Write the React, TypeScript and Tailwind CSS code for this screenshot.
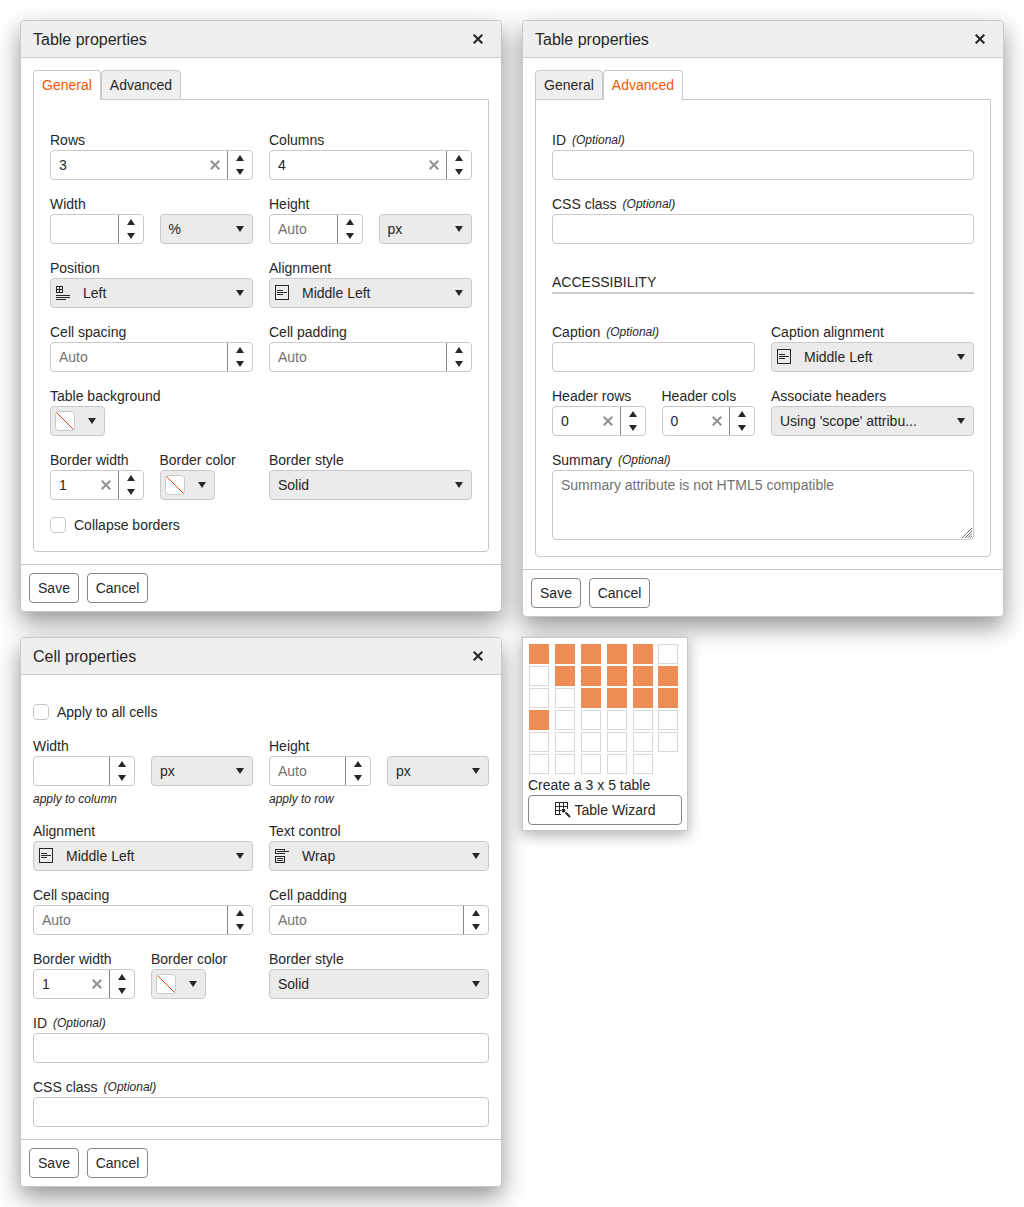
import type { ReactNode } from "react";

function Up({ down = false }: { down?: boolean }) {
  return (
    <svg width="8" height="6" viewBox="0 0 8 6" fill="#272727" className={down ? "rotate-180" : ""}>
      <path d="M4 0L8 6H0Z" />
    </svg>
  );
}

function Clear() {
  return (
    <svg width="10" height="10" viewBox="0 0 10 10" stroke="#939393" strokeWidth="2.1" className="mr-[7px] shrink-0">
      <path d="M.7.7L9.3 9.3M9.3.7L.7 9.3" />
    </svg>
  );
}

function Num({ value, placeholder }: { value?: string; placeholder?: string }) {
  return (
    <div className="flex h-[30px] w-full overflow-hidden rounded-[4px] border border-[#c9c9c9] bg-white">
      <div className="flex min-w-0 flex-1 items-center justify-between pl-2">
        <span className={value ? "" : "text-[#727272]"}>{value ?? placeholder}</span>
        {value && <Clear />}
      </div>
      <div className="flex w-[25px] flex-col items-center gap-2 border-l border-[#85858f] pt-1">
        <Up />
        <Up down />
      </div>
    </div>
  );
}

function Select({ children, icon }: { children: ReactNode; icon?: ReactNode }) {
  return (
    <div className="flex h-[30px] w-full items-center rounded-[4px] border border-[#c9c9c9] bg-[#ebebeb] pr-2">
      {icon && <span className="ml-[5px] mr-3 w-[15px] shrink-0">{icon}</span>}
      <span className={icon ? "flex-1 whitespace-nowrap" : "flex-1 whitespace-nowrap pl-2"}>{children}</span>
      <Up down />
    </div>
  );
}

function Color() {
  return (
    <div className="flex h-[30px] w-[55px] items-center justify-between rounded-[4px] border border-[#c9c9c9] bg-[#ebebeb] pl-1 pr-2">
      <svg width="20" height="20" viewBox="0 0 20 20">
        <rect x=".5" y=".5" width="19" height="19" rx="3" fill="#fff" stroke="#c9c9c9" />
        <path d="M1.5 1.5L18.5 18.5" stroke="#e0421d" />
      </svg>
      <Up down />
    </div>
  );
}

function Field({ label, optional, children }: { label: string; optional?: boolean; children?: ReactNode }) {
  return (
    <div className="min-w-0">
      <div className="h-5 whitespace-nowrap leading-5">
        {label}
        {optional && <i className="ml-1.5 align-top text-[12px] leading-5">(Optional)</i>}
      </div>
      {children ?? <div className="h-[30px] rounded-[4px] border border-[#c9c9c9] bg-white" />}
    </div>
  );
}

function Pair({ children }: { children: ReactNode }) {
  return <div className="grid grid-cols-2 gap-x-4">{children}</div>;
}

function Check({ children }: { children: ReactNode }) {
  return (
    <div className="flex h-4 items-center gap-2">
      <span className="size-4 rounded-[4px] border border-[#c9c9c9]" />
      {children}
    </div>
  );
}

function Button({ children, className }: { children: ReactNode; className: string }) {
  return (
    <button
      className={`${className} flex h-[30px] items-center justify-center rounded-[4px] border border-[#85858f] bg-white`}
    >
      {children}
    </button>
  );
}

function Dialog({ title, children }: { title: string; children: ReactNode }) {
  return (
    <section className="w-[482px] rounded-[4px] border border-[#c9c9c9] bg-white shadow-[0_10px_24px_rgba(0,0,0,0.42)]">
      <header className="flex h-[37px] items-center justify-between rounded-t-[3px] border-b border-[#c9c9c9] bg-[#efefef] pl-3 pr-[18px] text-[16px]">
        <span className="pt-0.5">{title}</span>
        <svg width="10" height="10" viewBox="0 0 10 10" stroke="#272727" strokeWidth="2.1">
          <path d="M.7.7L9.3 9.3M9.3.7L.7 9.3" />
        </svg>
      </header>
      <div className="p-3">{children}</div>
      <footer className="flex gap-2 border-t border-[#c9c9c9] p-2">
        <Button className="w-[50px]">Save</Button>
        <Button className="w-[61px]">Cancel</Button>
      </footer>
    </section>
  );
}

function Tabs({ active }: { active: string }) {
  return (
    <div className="relative z-10 -mb-px flex">
      {["General", "Advanced"].map((t) => (
        <div
          key={t}
          className={
            t === active
              ? "h-[30px] rounded-t-[4px] border border-b-white border-[#c9c9c9] bg-white px-2 leading-[28px] text-[#f35800]"
              : "h-[30px] rounded-t-[4px] border border-[#c9c9c9] bg-[#efefef] px-2 leading-[28px]"
          }
        >
          {t}
        </div>
      ))}
    </div>
  );
}

function Panel({ children }: { children: ReactNode }) {
  return (
    <div className="flex flex-col gap-3.5 rounded-b-[4px] border border-[#c9c9c9] px-4 pt-[30px]">{children}</div>
  );
}

const AlignIcon = () => (
  <svg width="15" height="16" viewBox="0 0 15 16" fill="none" stroke="#272727" shapeRendering="crispEdges">
    <path d="M.5 .5h13v14H.5zM2 5.5h6M2 7.5h10M2 9.5h6" />
  </svg>
);

const PositionIcon = () => (
  <svg width="15" height="16" viewBox="0 0 15 16" fill="none" stroke="#272727" shapeRendering="crispEdges">
    <path d="M.5 1.5h6v6h-6zM3.5 1v7M0 4.5h7M0 10.5h14M0 12.5h14M0 14.5h10" />
  </svg>
);

const WrapIcon = () => (
  <svg width="15" height="16" viewBox="0 0 15 16" fill="none" stroke="#272727" shapeRendering="crispEdges">
    <path d="M14 3.5H2M9.5 3V1.5h-9v4h9V5M.5 8.5h9v6h-9zM2 10.5h6M2 12.5h6" />
  </svg>
);

const WizardIcon = () => (
  <svg width="16" height="16" viewBox="0 0 16 16" fill="none" stroke="#272727">
    <path d="M6 12.5H.5V.5h12V7M4.5 0v13M8.5 0v6M0 4.5h13M0 8.5h6" shapeRendering="crispEdges" />
    <path d="M10.5 10.5L15 15" strokeWidth="2" />
    <path d="M8.5 6.5v4M6.5 8.5h4M7 7l3 3M10 7l-3 3" />
  </svg>
);

function TableDialog() {
  return (
    <Dialog title="Table properties">
      <Tabs active="General" />
      <Panel>
        <Pair>
          <Field label="Rows"><Num value="3" /></Field>
          <Field label="Columns"><Num value="4" /></Field>
        </Pair>
        <Pair>
          <Field label="Width"><Pair><Num /><Select>%</Select></Pair></Field>
          <Field label="Height"><Pair><Num placeholder="Auto" /><Select>px</Select></Pair></Field>
        </Pair>
        <Pair>
          <Field label="Position"><Select icon={<PositionIcon />}>Left</Select></Field>
          <Field label="Alignment"><Select icon={<AlignIcon />}>Middle Left</Select></Field>
        </Pair>
        <Pair>
          <Field label="Cell spacing"><Num placeholder="Auto" /></Field>
          <Field label="Cell padding"><Num placeholder="Auto" /></Field>
        </Pair>
        <Field label="Table background"><Color /></Field>
        <Pair>
          <Pair>
            <Field label="Border width"><Num value="1" /></Field>
            <Field label="Border color"><Color /></Field>
          </Pair>
          <Field label="Border style"><Select>Solid</Select></Field>
        </Pair>
        <div className="pb-[18px] pt-[3px]"><Check>Collapse borders</Check></div>
      </Panel>
    </Dialog>
  );
}

function AdvancedDialog() {
  return (
    <Dialog title="Table properties">
      <Tabs active="Advanced" />
      <Panel>
        <Field label="ID" optional />
        <Field label="CSS class" optional />
        <h3 className="mb-3.5 mt-3.5 h-[22px] border-b-2 border-[#c9c9c9] leading-5">ACCESSIBILITY</h3>
        <Pair>
          <Field label="Caption" optional />
          <Field label="Caption alignment"><Select icon={<AlignIcon />}>Middle Left</Select></Field>
        </Pair>
        <Pair>
          <Pair>
            <Field label="Header rows"><Num value="0" /></Field>
            <Field label="Header cols"><Num value="0" /></Field>
          </Pair>
          <Field label="Associate headers"><Select>Using 'scope' attribu...</Select></Field>
        </Pair>
        <div className="pb-4">
          <Field label="Summary" optional>
            <div className="relative">
              <textarea
                className="block h-[70px] w-full resize-none rounded-[4px] border border-[#c9c9c9] px-2 py-1 leading-5 placeholder:text-[#727272]"
                placeholder="Summary attribute is not HTML5 compatible"
              />
              <svg width="10" height="10" viewBox="0 0 10 10" stroke="#727272" className="absolute bottom-0.5 right-0.5">
                <path d="M0 10L10 0M3 10L10 3M5.5 10L10 5.5M8 10L10 8" />
              </svg>
            </div>
          </Field>
        </div>
      </Panel>
    </Dialog>
  );
}

function CellDialog() {
  return (
    <Dialog title="Cell properties">
      <div className="flex flex-col gap-3.5 pt-[17px]">
        <div className="mb-0.5"><Check>Apply to all cells</Check></div>
        <Pair>
          <Field label="Width">
            <Pair><Num /><Select>px</Select></Pair>
            <i className="mt-[3px] block h-[18px] text-[12px] leading-5">apply to column</i>
          </Field>
          <Field label="Height">
            <Pair><Num placeholder="Auto" /><Select>px</Select></Pair>
            <i className="mt-[3px] block h-[18px] text-[12px] leading-5">apply to row</i>
          </Field>
        </Pair>
        <Pair>
          <Field label="Alignment"><Select icon={<AlignIcon />}>Middle Left</Select></Field>
          <Field label="Text control"><Select icon={<WrapIcon />}>Wrap</Select></Field>
        </Pair>
        <Pair>
          <Field label="Cell spacing"><Num placeholder="Auto" /></Field>
          <Field label="Cell padding"><Num placeholder="Auto" /></Field>
        </Pair>
        <Pair>
          <Pair>
            <Field label="Border width"><Num value="1" /></Field>
            <Field label="Border color"><Color /></Field>
          </Pair>
          <Field label="Border style"><Select>Solid</Select></Field>
        </Pair>
        <Field label="ID" optional />
        <Field label="CSS class" optional />
      </div>
    </Dialog>
  );
}

const cells = "111110" + "011111" + "001111" + "100000" + "000000" + "00000";

function TablePicker() {
  return (
    <div className="relative h-[194px] w-[166px] border border-[#c9c9c9] bg-white px-[5px] pt-1.5 shadow-[0_4px_14px_rgba(0,0,0,0.32)]">
      <div className="ml-px grid grid-cols-[26px_26px_26px_26px_25px_20px] gap-y-0.5">
        {cells.split("").map((c, i) => (
          <span key={i} className={c === "1" ? "size-5 bg-[#ed8c55]" : "size-5 border border-[#d9d9d9]"} />
        ))}
      </div>
      <div className="mt-px h-5 leading-5">Create a 3 x 5 table</div>
      <button className="flex h-[30px] w-full items-center justify-center gap-1 rounded-[4px] border border-[#85858f]">
        <WizardIcon />
        Table Wizard
      </button>
    </div>
  );
}

export default function App() {
  return (
    <main className="flex h-[1207px] w-[1024px] gap-5 overflow-hidden bg-white p-5 font-['Liberation_Sans',Arial,sans-serif] text-[14px] leading-5 text-[#272727]">
      <div className="flex flex-col gap-[25px]">
        <TableDialog />
        <CellDialog />
      </div>
      <div className="flex flex-col gap-5">
        <AdvancedDialog />
        <TablePicker />
      </div>
    </main>
  );
}
